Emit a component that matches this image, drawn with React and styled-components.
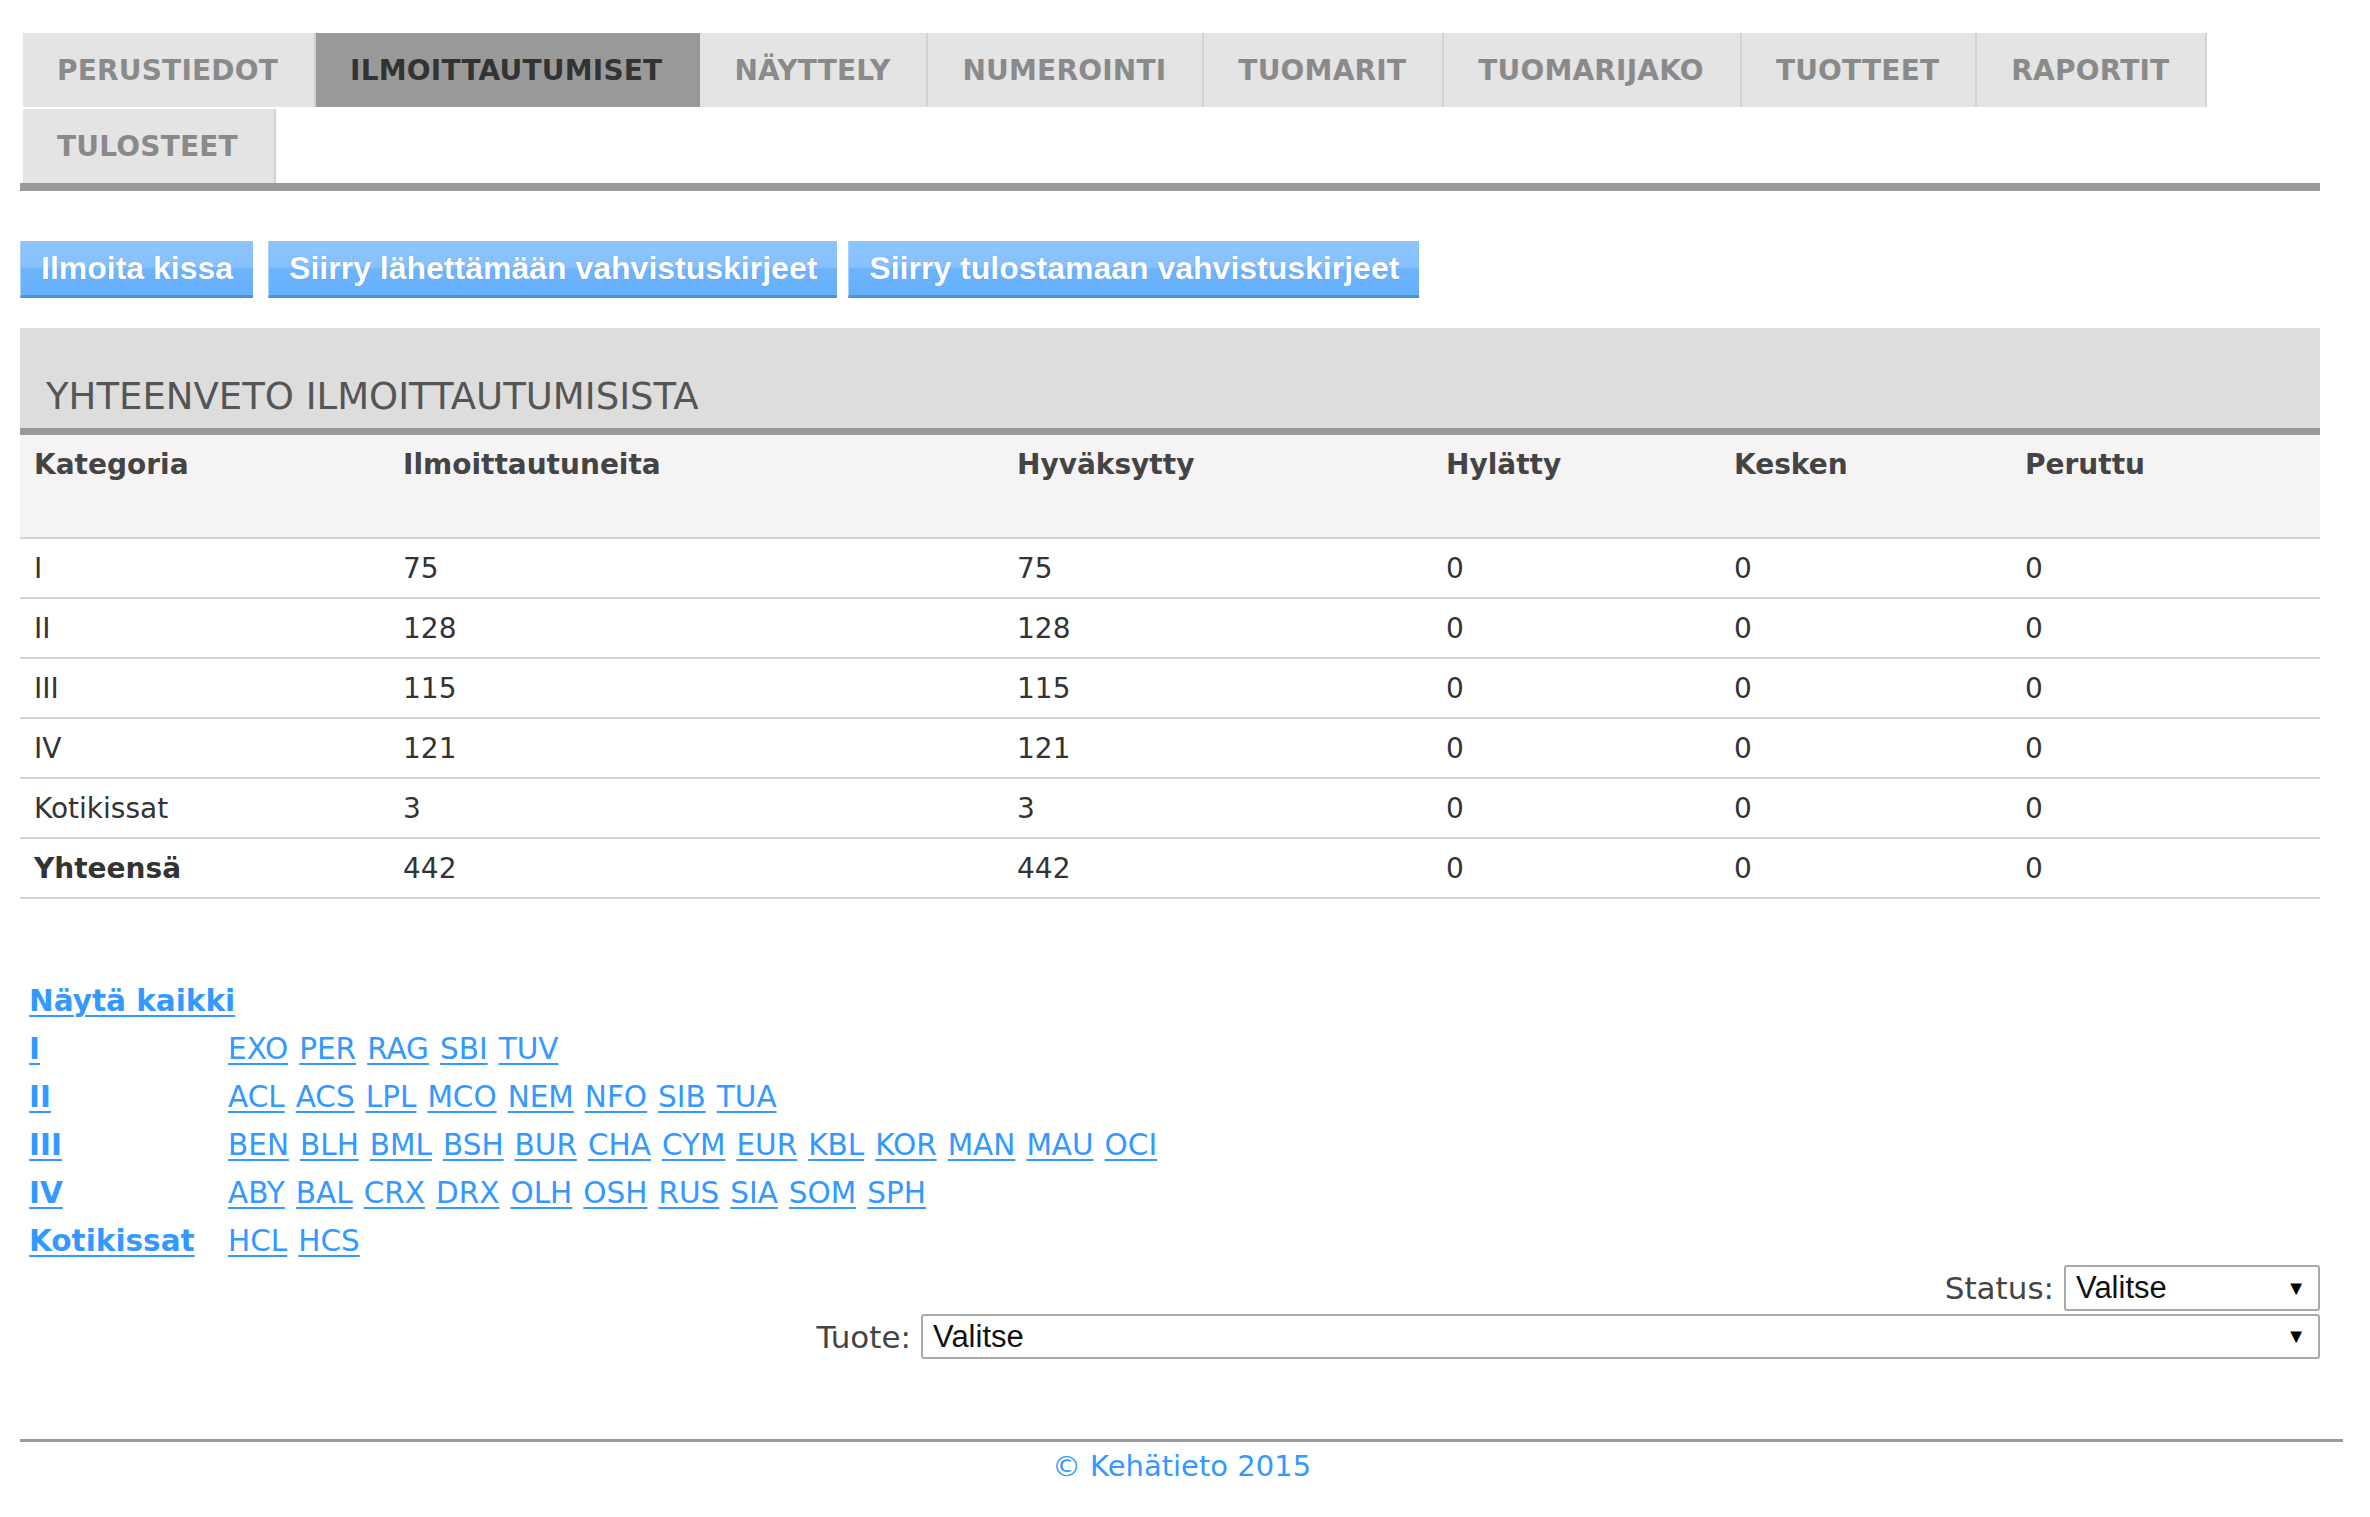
import React from 'react'
import styled, { createGlobalStyle } from 'styled-components'

const GlobalStyle = createGlobalStyle`
  body {
    margin: 0;
    background: #fff;
    font-family: 'DejaVu Sans', Verdana, sans-serif;
    color: #333;
  }
`

const Page = styled.div`
  padding: 33px 27px 0 20px;
`

const Content = styled.div`
  width: 2300px;
`

const TabBar = styled.div`
  display: flex;
  flex-wrap: wrap;
  row-gap: 2px;
  padding-left: 3px;
  border-bottom: 8px solid #999;
`

const Tab = styled.div`
  height: 74px;
  display: flex;
  align-items: center;
  padding: 0 36px 0 34px;
  background: ${p => (p.$active ? '#999' : '#e4e4e4')};
  color: ${p => (p.$active ? '#333' : '#8a8a8a')};
  border-right: 2px solid ${p => (p.$active ? '#999' : '#d2d2d2')};
  font-size: 28px;
  font-weight: bold;
  letter-spacing: 0.2px;
`

const ButtonRow = styled.div`
  display: flex;
  gap: 11px;
  margin-top: 50px;
`

const BlueButton = styled.div`
  height: 57px;
  box-sizing: border-box;
  display: flex;
  align-items: center;
  padding: 0 20px;
  margin-right: ${p => p.$extra || '0'};
  background: linear-gradient(#8dc5fd 0%, #86c1fd 48%, #6db4fc 52%, #66b0fc 100%);
  border-bottom: 3px solid #4c91db;
  border-left: 1px solid #a6d1fd;
  color: #fff;
  font-family: 'Liberation Sans', Arial, sans-serif;
  font-weight: bold;
  font-size: 32px;
  text-shadow: 0 0 1px rgba(40, 90, 160, 0.5);
  white-space: nowrap;
`

const SummaryHead = styled.div`
  margin-top: 30px;
  height: 107px;
  box-sizing: border-box;
  background: #dddddd;
  border-bottom: 7px solid #999;
  display: flex;
  align-items: flex-end;
  padding: 0 0 10px 26px;
  font-size: 37px;
  color: #555;
`

const Table = styled.table`
  width: 100%;
  border-collapse: collapse;
  table-layout: fixed;
  font-size: 28px;
`

const Th = styled.th`
  background: #f5f3f4;
  height: 103px;
  box-sizing: border-box;
  vertical-align: top;
  text-align: left;
  padding: 13px 0 0 14px;
  color: #444;
  font-weight: bold;
  border-bottom: 2px solid #cdd5de;
`

const Td = styled.td`
  height: 60px;
  box-sizing: border-box;
  padding: 0 0 0 14px;
  border-bottom: 2px solid #cdd5de;
  color: #333;
  font-weight: ${p => (p.$bold ? 'bold' : 'normal')};
`

const LinkList = styled.div`
  margin-top: 78px;
  padding-left: 9px;
  display: grid;
  grid-template-columns: 199px 1fr;
  grid-auto-rows: 48px;
  align-items: center;
  font-size: 29.5px;
`

const BlueLink = styled.a`
  color: #3399ff;
  text-decoration: underline;
  text-decoration-thickness: 2px;
  text-underline-offset: 4px;
  font-weight: ${p => (p.$bold ? 'bold' : 'normal')};
  cursor: pointer;
  margin-right: ${p => (p.$spaced ? '11px' : '0')};
`

const FullRow = styled.div`
  grid-column: 1 / span 2;
`

const Codes = styled.div`
  white-space: nowrap;
`

const FilterRow = styled.div`
  display: flex;
  justify-content: flex-end;
  align-items: center;
  gap: 10px;
  margin-top: ${p => p.$top || '0'};
`

const FilterLabel = styled.span`
  font-size: 31px;
  color: #444;
`

const SelectBox = styled.div`
  width: ${p => p.$width};
  height: ${p => p.$height};
  box-sizing: border-box;
  border: 2px solid #a9a9a9;
  border-radius: 3px;
  display: flex;
  align-items: center;
  justify-content: space-between;
  padding: 0 12px 0 10px;
  font-family: 'Liberation Sans', Arial, sans-serif;
  font-size: 31px;
  color: #111;
  background: #fff;
`

const Arrow = styled.span`
  font-size: 20px;
  color: #000;
`

const Footer = styled.div`
  margin-top: 80px;
  width: 2323px;
  border-top: 3px solid #9a9a9a;
  text-align: center;
  padding-top: 4px;
  font-size: 29px;
  color: #3399ff;
  line-height: 40px;
`

const tabs = [
  'PERUSTIEDOT', 'ILMOITTAUTUMISET', 'NÄYTTELY', 'NUMEROINTI', 'TUOMARIT',
  'TUOMARIJAKO', 'TUOTTEET', 'RAPORTIT', 'TULOSTEET',
]

const cols = [
  { title: 'Kategoria', width: '369px' },
  { title: 'Ilmoittautuneita', width: '614px' },
  { title: 'Hyväksytty', width: '429px' },
  { title: 'Hylätty', width: '288px' },
  { title: 'Kesken', width: '291px' },
  { title: 'Peruttu', width: 'auto' },
]

const rows = [
  ['I', '75', '75', '0', '0', '0'],
  ['II', '128', '128', '0', '0', '0'],
  ['III', '115', '115', '0', '0', '0'],
  ['IV', '121', '121', '0', '0', '0'],
  ['Kotikissat', '3', '3', '0', '0', '0'],
  ['Yhteensä', '442', '442', '0', '0', '0'],
]

const breeds = [
  ['I', ['EXO', 'PER', 'RAG', 'SBI', 'TUV']],
  ['II', ['ACL', 'ACS', 'LPL', 'MCO', 'NEM', 'NFO', 'SIB', 'TUA']],
  ['III', ['BEN', 'BLH', 'BML', 'BSH', 'BUR', 'CHA', 'CYM', 'EUR', 'KBL', 'KOR', 'MAN', 'MAU', 'OCI']],
  ['IV', ['ABY', 'BAL', 'CRX', 'DRX', 'OLH', 'OSH', 'RUS', 'SIA', 'SOM', 'SPH']],
  ['Kotikissat', ['HCL', 'HCS']],
]

const App = () => {
  return (
    <>
      <GlobalStyle />
      <Page>
        <Content>
          <TabBar>
            {tabs.map(t => (
              <Tab key={t} $active={t === 'ILMOITTAUTUMISET'}>{t}</Tab>
            ))}
          </TabBar>

          <ButtonRow>
            <BlueButton $extra="4px">Ilmoita kissa</BlueButton>
            <BlueButton>Siirry lähettämään vahvistuskirjeet</BlueButton>
            <BlueButton>Siirry tulostamaan vahvistuskirjeet</BlueButton>
          </ButtonRow>

          <SummaryHead>YHTEENVETO ILMOITTAUTUMISISTA</SummaryHead>
          <Table>
            <colgroup>
              {cols.map(c => <col key={c.title} style={{ width: c.width }} />)}
            </colgroup>
            <thead>
              <tr>
                {cols.map(c => <Th key={c.title}>{c.title}</Th>)}
              </tr>
            </thead>
            <tbody>
              {rows.map(r => (
                <tr key={r[0]}>
                  {r.map((cell, i) => (
                    <Td key={i} $bold={i === 0 && r[0] === 'Yhteensä'}>{cell}</Td>
                  ))}
                </tr>
              ))}
            </tbody>
          </Table>

          <LinkList>
            <FullRow>
              <BlueLink $bold>Näytä kaikki</BlueLink>
            </FullRow>
            {breeds.map(([cat, codes]) => (
              <React.Fragment key={cat}>
                <div><BlueLink $bold>{cat}</BlueLink></div>
                <Codes>
                  {codes.map(code => (
                    <BlueLink key={code} $spaced>{code}</BlueLink>
                  ))}
                </Codes>
              </React.Fragment>
            ))}
          </LinkList>

          <FilterRow>
            <FilterLabel>Status:</FilterLabel>
            <SelectBox $width="256px" $height="46px">
              Valitse <Arrow>▼</Arrow>
            </SelectBox>
          </FilterRow>
          <FilterRow $top="3px">
            <FilterLabel>Tuote:</FilterLabel>
            <SelectBox $width="1399px" $height="45px">
              Valitse <Arrow>▼</Arrow>
            </SelectBox>
          </FilterRow>
        </Content>

        <Footer>© Kehätieto 2015</Footer>
      </Page>
    </>
  )
}

export default App
